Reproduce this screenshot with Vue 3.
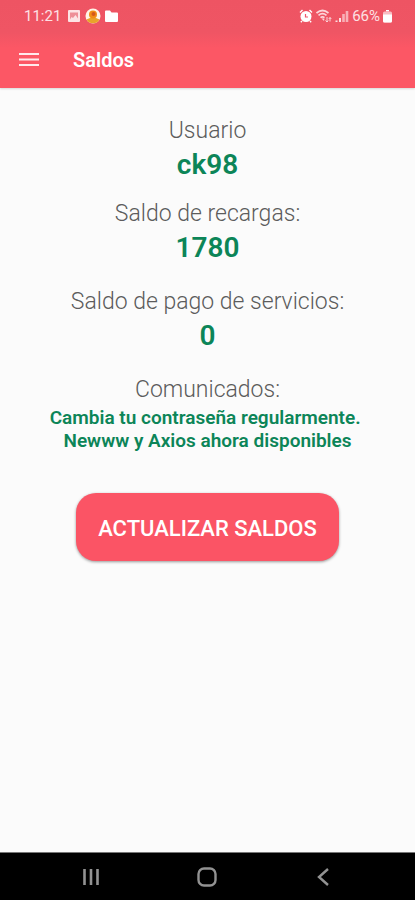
<template>
  <div class="screen">
    <header class="header">
      <div class="status-bar">
        <div class="status-group">
          <span class="clock">11:21</span>
          <svg class="status-icon" viewBox="0 0 14 14">
            <rect x="1" y="1" width="12" height="12" rx="1" fill="#fde3e5" />
            <path d="M3 10.500V3.500h8v6L8.500 6 6 9 4.500 8z" fill="#ee8f98" />
          </svg>
          <svg class="status-icon status-icon-lg" viewBox="0 0 16 16">
            <circle cx="8" cy="8" r="7.500" fill="#fff4e6" />
            <path d="M1.500 11.500a7.400 7.400 0 0 0 13 0l-3.500-1.500H5z" fill="#e9a32a" />
            <circle cx="8" cy="6.500" r="4" fill="#f28c14" />
            <circle cx="8.500" cy="6" r="2" fill="#d4581c" />
          </svg>
          <svg class="status-icon" viewBox="0 0 14 14">
            <path d="M0 2.500a1 1 0 0 1 1-1h4L6.500 3.500H12a1 1 0 0 1 1 1V12a1 1 0 0 1-1 1H1a1 1 0 0 1-1-1z" fill="#fff" />
          </svg>
        </div>
        <div class="status-group status-right">
          <svg class="status-icon" viewBox="0 0 14 14">
            <path d="M1 3.500L3.500 1M13 3.500L10.500 1M3 12l-1.200 1.200M11 12l1.200 1.200" stroke="#fff" stroke-width="1.400" />
            <circle cx="7" cy="7.500" r="5.500" fill="#fff" />
            <path d="M6.500 5v3H9" fill="none" stroke="#f0566a" stroke-width="1.200" />
          </svg>
          <svg class="status-icon status-icon-lg wifi" viewBox="0 0 16 14">
            <path d="M.5 4q6-5 12 0M2.500 6.300q4-3.300 8 0M4.500 8.600q2-1.600 4 0" fill="none" stroke="#fcd5d9" stroke-width="1.700" />
            <path d="M5.500 9.500h3L8 12z" fill="#fcd5d9" />
            <path d="M11 8v5M9.500 11.500L11 13l1.300-1.500M14 12.500V8.500M12.700 10L14 8.500l1.300 1.500" fill="none" stroke="#fcd5d9" />
          </svg>
          <svg class="status-icon" viewBox="0 0 14 14">
            <path d="M1.500 11.500v1.500M5 9v4" stroke="#fcdfe2" stroke-width="2" />
            <path d="M8.500 5v8M12 2v11" stroke="#f8b0b7" stroke-width="2.600" />
          </svg>
          <span class="battery-level">66%</span>
          <svg class="battery" viewBox="0 0 9 14">
            <path d="M3 1h3v1.500H3z" fill="#fff" />
            <rect y="2.500" width="9" height="11" rx="1.500" fill="#f9bcc2" />
            <path d="M0 5.500h9V12a1.500 1.500 0 0 1-1.500 1.500h-6A1.500 1.500 0 0 1 0 12z" fill="#fff" />
          </svg>
        </div>
      </div>
      <div class="toolbar">
        <button class="menu-button" type="button" aria-label="Menú">
          <svg viewBox="0 0 20 16">
            <path d="M0 2h20M0 7.500h20M0 13h20" stroke="#ffe9eb" stroke-width="2" />
          </svg>
        </button>
        <h1 class="title">Saldos</h1>
      </div>
    </header>

    <main class="content">
      <section v-for="item in balances" :key="item.label" class="balance" :class="{ spaced: item.spaced }">
        <h2 class="label">{{ item.label }}</h2>
        <p class="value">{{ item.value }}</p>
      </section>
      <section class="notices">
        <h2 class="label">Comunicados:</h2>
        <p class="notice">{{ notice }}</p>
      </section>
      <button class="refresh" type="button">ACTUALIZAR SALDOS</button>
    </main>

    <nav class="nav-bar">
      <button class="nav-button" type="button" aria-label="Recientes">
        <svg viewBox="0 0 20 20">
          <path d="M3.500 2v16M10 2v16M16.500 2v16" stroke="#929292" stroke-width="2.600" />
        </svg>
      </button>
      <button class="nav-button" type="button" aria-label="Inicio">
        <svg viewBox="0 0 20 20">
          <rect x="1.500" y="1.500" width="17" height="17" rx="5.500" fill="none" stroke="#929292" stroke-width="2.400" />
        </svg>
      </button>
      <button class="nav-button" type="button" aria-label="Atrás">
        <svg viewBox="0 0 20 20">
          <path d="M14 2L5 10l9 8" fill="none" stroke="#929292" stroke-width="2.400" />
        </svg>
      </button>
    </nav>
  </div>
</template>

<script setup>
const balances = [
  { label: "Usuario", value: "ck98" },
  { label: "Saldo de recargas:", value: "1780", spaced: true },
  { label: "Saldo de pago de servicios:", value: "0", spaced: true },
];

const notice = "Cambia tu contraseña regularmente.\u00a0\nNewww y Axios ahora disponibles";
</script>

<style>
body {
  margin: 0;
}
</style>

<style scoped>
.screen {
  display: flex;
  flex-direction: column;
  min-height: 100vh;
  background-color: #fbfbfb;
  font-family: Roboto, "Liberation Sans", sans-serif;
}

.header {
  background: linear-gradient(#ee5463, #ef5564 32px, #fc5765 48px);
  color: white;
  box-shadow: 0 1px 2px rgba(0, 0, 0, 0.15);
}

.status-bar {
  display: flex;
  align-items: center;
  justify-content: space-between;
  height: 32px;
  padding: 0 23px 0 24px;
  font-size: 15px;
  color: #fde0e3;
}

.status-group {
  display: flex;
  align-items: center;
  gap: 4px;
}

.status-right {
  gap: 3px;
}

.clock {
  margin-right: 2px;
}

.status-icon {
  width: 14px;
  height: 14px;
}

.status-icon-lg {
  width: 16px;
  height: 16px;
}

.wifi {
  height: 14px;
}

.battery {
  width: 9px;
  height: 14px;
}

.toolbar {
  display: flex;
  align-items: center;
  gap: 34px;
  height: 56px;
  padding: 0 19px;
}

.menu-button,
.nav-button {
  display: flex;
  align-items: center;
  justify-content: center;
  padding: 0;
  border: none;
  background: none;
  cursor: pointer;
}

.menu-button svg {
  width: 20px;
  height: 16px;
}

.title {
  margin: 0;
  font-size: 20px;
  font-weight: 600;
  line-height: 24px;
}

.content {
  flex: 1;
  display: flex;
  flex-direction: column;
  align-items: center;
  padding: 27px 16px;
  text-align: center;
}

.balance {
  margin-bottom: 15px;
}

.balance.spaced {
  margin-bottom: 20px;
}

.label {
  margin: 0;
  color: #5c5c5c;
  font-size: 23px;
  font-weight: 300;
  line-height: 32px;
}

.value {
  margin: 0;
  color: #0c8558;
  font-size: 28px;
  font-weight: 600;
  line-height: 36px;
}

.notice {
  margin: 0;
  color: #0c8558;
  font-size: 19px;
  font-weight: 600;
  line-height: 23px;
  white-space: pre-line;
}

.refresh {
  margin-top: 41px;
  padding: 22px 22px 18px;
  border: none;
  border-radius: 20px;
  background-color: #fb5465;
  box-shadow: 0 1px 3px rgba(0, 0, 0, 0.4);
  color: white;
  font-family: inherit;
  font-size: 22px;
  font-weight: 500;
  line-height: 28px;
  cursor: pointer;
}

.nav-bar {
  display: grid;
  grid-template-columns: repeat(3, 1fr);
  height: 47px;
  padding: 0 8%;
  border-top: 1px solid #777777;
  background-color: black;
}

.nav-button svg {
  width: 20px;
  height: 20px;
}
</style>
